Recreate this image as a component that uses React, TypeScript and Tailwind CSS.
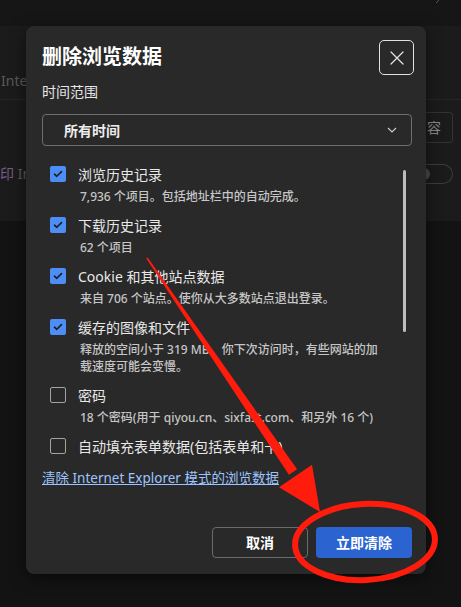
import * as React from "react";

const FONT = { fontFamily: '"Noto Sans", "Noto Sans CJK SC", sans-serif' };

interface ItemProps {
  label: string;
  desc?: string[];
  checked: boolean;
}

function CheckItem({ label, desc = [], checked }: ItemProps) {
  return (
    <div className="flex flex-col pl-[8px]">
      <div className="flex h-[24px] items-center gap-[12px]">
        {checked ? (
          <span className="flex h-[16px] w-[16px] flex-shrink-0 items-center justify-center rounded-[2px] bg-[#4d8df6]">
            <svg width="10" height="8" viewBox="0 0 10 8" fill="none">
              <path d="M1.5 4.2 L3.8 6.3 L8.5 1.6" stroke="#1c1c1c" strokeWidth="1.6" strokeLinecap="round" strokeLinejoin="round" />
            </svg>
          </span>
        ) : (
          <span className="h-[16px] w-[16px] flex-shrink-0 rounded-[2px] border border-[#a3a3a3]" />
        )}
        <span className="whitespace-nowrap text-[14px] text-[#e8e8e8]">{label}</span>
      </div>
      {desc.length > 0 && (
        <div className="mt-[2px] pl-[30px] text-[12px] leading-[17px] font-medium text-[#c6c6c6]">
          {desc.map((d) => (
            <div key={d} className="whitespace-nowrap">{d}</div>
          ))}
        </div>
      )}
    </div>
  );
}

export default function App() {
  return (
    <div className="relative h-[607px] w-[461px] overflow-hidden bg-[#131313]" style={FONT}>
      {/* dimmed settings page behind */}
      <div className="flex h-[26px] items-start justify-end bg-[#161616] pr-[18px]">
        <svg width="8" height="6" viewBox="0 0 8 6" className="mt-[-2px]">
          <path d="M1 5 L5 1" stroke="#555" strokeWidth="1" fill="none" />
        </svg>
      </div>
      <div className="flex flex-col bg-[#1b1b1b]">
        <div className="flex h-[74px] items-end border-b border-[#262626] pb-[8px]">
          <span className="ml-[1px] w-[25px] overflow-hidden whitespace-nowrap text-[14px] text-[#5a5a5a]">Internet</span>
        </div>
        <div className="flex h-[121px] items-start justify-between pr-[8px]">
          <span className="mt-[63px] w-[26px] overflow-hidden whitespace-nowrap text-[14px] text-[#5d5d5d]">
            <span className="text-[#7a5a8a]">印</span> Int
          </span>
          <div className="flex flex-col items-end gap-[21px] pt-[12px]">
            <div className="flex h-[31px] w-[28px] items-center justify-end rounded-r-[4px] border border-l-0 border-[#333] pr-[11px] text-[14px] text-[#8a8a8a]">
              容
            </div>
            <div className="flex h-[20px] w-[28px] items-center rounded-r-full border border-l-0 border-[#3c3c3c]">
              <span className="ml-[-1px] h-[12px] w-[6px] rounded-r-full bg-[#4a4a4a]" />
            </div>
          </div>
        </div>
      </div>

      {/* dialog */}
      <div className="absolute left-[26px] top-[26px] flex h-[548px] w-[400px] flex-col rounded-[8px] bg-[#292929] shadow-[0_4px_16px_rgba(0,0,0,0.5)]">
        <div className="flex items-start justify-between pl-[16px] pr-[12px] pt-[14px]">
          <h2 className="mt-[3px] text-[20px] leading-[28px] font-bold text-white">删除浏览数据</h2>
          <button className="flex h-[35px] w-[35px] items-center justify-center rounded-[5px] border-[1.5px] border-[#e2e2e2]">
            <svg width="14" height="14" viewBox="0 0 14 14">
              <path d="M1 1 L13 13 M13 1 L1 13" stroke="#e6e6e6" strokeWidth="1.2" strokeLinecap="round" />
            </svg>
          </button>
        </div>

        <div className="mt-[7px] pl-[16px] text-[14px] leading-[20px] text-[#e6e6e6]">时间范围</div>

        <div className="ml-[16px] mr-[14px] mt-[12px] flex h-[32px] items-center justify-between rounded-[4px] border border-[#6e6e6e] pl-[21px] pr-[14px]">
          <span className="text-[14px] font-semibold text-[#ededed]">所有时间</span>
          <svg width="10" height="6" viewBox="0 0 10 6">
            <path d="M1 1 L5 5 L9 1" stroke="#cfcfcf" strokeWidth="1.1" fill="none" />
          </svg>
        </div>

        <div className="ml-[16px] mr-[20px] mt-[9px] flex h-[300px]">
          <div className="flex flex-1 flex-col gap-[8px] overflow-hidden pt-[7px]">
            <CheckItem checked label="浏览历史记录" desc={["7,936 个项目。包括地址栏中的自动完成。"]} />
            <CheckItem checked label="下载历史记录" desc={["62 个项目"]} />
            <CheckItem checked label="Cookie 和其他站点数据" desc={["来自 706 个站点。使你从大多数站点退出登录。"]} />
            <CheckItem
              checked
              label="缓存的图像和文件"
              desc={["释放的空间小于 319 MB。你下次访问时，有些网站的加", "载速度可能会变慢。"]}
            />
            <CheckItem checked={false} label="密码" desc={["18 个密码(用于 qiyou.cn、sixfast.com、和另外 16 个)"]} />
            <CheckItem checked={false} label="自动填充表单数据(包括表单和卡)" />
          </div>
          <div className="w-[3px]">
            <div className="mt-[15px] h-[162px] w-[3px] rounded-full bg-[#bdbdbd]" />
          </div>
        </div>

        <a className="mt-[13px] pl-[16px] text-[13.5px] leading-[20px] text-[#9cc4ff] underline">
          清除 Internet Explorer 模式的浏览数据
        </a>

        <div className="mt-auto flex justify-end gap-[8px] pb-[16px] pr-[14px]">
          <button className="h-[31px] w-[96px] rounded-[4px] border border-[#6b6b6b] text-[14px] font-bold text-white">
            取消
          </button>
          <button className="h-[31px] w-[96px] rounded-[4px] bg-[#2b63d1] text-[14px] font-bold text-white">
            立即清除
          </button>
        </div>
      </div>

      {/* red annotation */}
      <svg className="pointer-events-none absolute left-0 top-0" width="461" height="607" viewBox="0 0 461 607">
        <polygon points="146.3,258.5 147.7,257.5 297.1,469.2 288.9,474.8" fill="#ff1c0c" />
        <polygon points="279,487.3 312,464.7 320,512" fill="#ff1c0c" />
        <ellipse cx="365" cy="542" rx="70" ry="38" fill="none" stroke="#ff1c0c" strokeWidth="6" transform="rotate(-3 365 542)" />
      </svg>
    </div>
  );
}
